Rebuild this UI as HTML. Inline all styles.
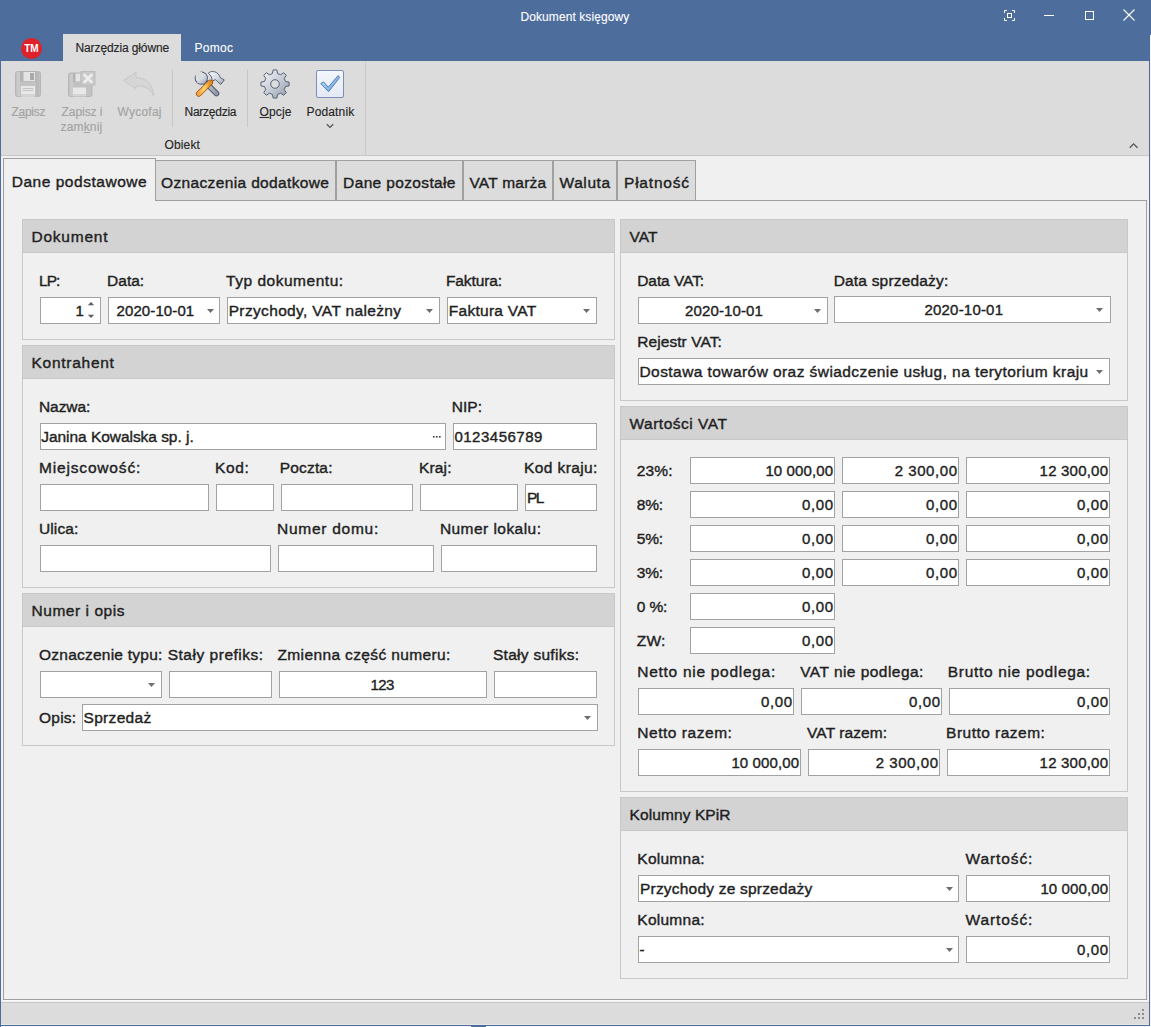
<!DOCTYPE html><html><head><meta charset="utf-8"><style>
html,body{margin:0;padding:0;}
body{width:1151px;height:1027px;position:relative;overflow:hidden;background:#f0f0f0;font-family:"Liberation Sans",sans-serif;}
.b{position:absolute;box-sizing:border-box;}
svg{display:block;}
.t{position:absolute;white-space:nowrap;line-height:20px;font-family:"Liberation Sans",sans-serif;-webkit-text-stroke:0.4px currentColor;}
.r{-webkit-text-stroke:0.15px currentColor;}
</style></head><body>
<div class="b" style="left:1149px;top:0px;width:2px;height:1027px;background:#4d6d9d;"></div>
<div class="b" style="left:0px;top:0px;width:1151px;height:61px;background:#4d6d9d;"></div>
<div class="t" style="top:7px;font-size:12px;color:#ffffff;-webkit-text-stroke:0.1px #fff;left:520.50px;letter-spacing:0.082px;">Dokument księgowy</div>
<svg class="b" style="left:1004px;top:10px" width="11" height="11" viewBox="0 0 11 11"><path d="M0.5 3V0.5H3M8 0.5H10.5V3M10.5 8V10.5H8M3 10.5H0.5V8" stroke="#fff" fill="none"/><rect x="3.5" y="3.5" width="4" height="4" stroke="#fff" fill="none"/></svg>
<div class="b" style="left:1044px;top:15px;width:10px;height:1px;background:#fff;"></div>
<div class="b" style="left:1085px;top:11px;width:9px;height:9px;border:1px solid #fff;"></div>
<svg class="b" style="left:1123px;top:9px" width="12" height="12" viewBox="0 0 12 12"><path d="M0.5 0.5L11.5 11.5M11.5 0.5L0.5 11.5" stroke="#fff" stroke-width="1.1"/></svg>
<svg class="b" style="left:21px;top:38px" width="21" height="21" viewBox="0 0 21 21"><circle cx="10.5" cy="10.5" r="10.5" fill="#df2229"/><text x="10.5" y="14.2" text-anchor="middle" font-family="Liberation Sans" font-weight="bold" font-size="10" fill="#fff">TM</text></svg>
<div class="b" style="left:63px;top:34px;width:118px;height:27px;background:#dcdcdc;"></div>
<div class="t" style="top:38px;font-size:12px;color:#262626;-webkit-text-stroke:0.15px currentColor;left:75.50px;letter-spacing:-0.113px;">Narzędzia główne</div>
<div class="t" style="top:38px;font-size:12px;color:#ffffff;-webkit-text-stroke:0.1px #fff;left:194.50px;letter-spacing:0.285px;">Pomoc</div>
<div class="b" style="left:1px;top:61px;width:1148px;height:95px;background:#dcdcdc;border-bottom:1px solid #c6c6c6;"></div>
<svg class="b" style="left:15px;top:71px" width="26" height="26" viewBox="0 0 26 26">
<rect x="0.5" y="0.5" width="25" height="25" rx="2" fill="#c2c2c2" stroke="#b6b6b6"/>
<rect x="2" y="1" width="3" height="24" fill="#cbcbcb"/>
<rect x="21" y="1" width="3" height="24" fill="#b9b9b9"/>
<rect x="5" y="0.5" width="16" height="10" fill="#b3b3b3"/>
<rect x="8.5" y="1" width="11.5" height="9" fill="#e4e4e4"/>
<rect x="15" y="2" width="4" height="7" fill="#a9a9a9"/>
<rect x="6" y="15" width="14" height="11" fill="#e8e8e8"/>
<rect x="7.5" y="17" width="11" height="1" fill="#c4c4c4"/>
<rect x="7.5" y="19" width="11" height="1" fill="#c4c4c4"/>
<rect x="6" y="23" width="14" height="3" fill="#d4d4d4"/>
</svg>
<svg class="b" style="left:68px;top:71px" width="28" height="26" viewBox="0 0 28 26">
<rect x="0.5" y="2" width="23.5" height="23.5" rx="2" fill="#c2c2c2" stroke="#b6b6b6"/>
<rect x="2" y="3" width="3" height="22" fill="#cbcbcb"/>
<rect x="5" y="2" width="14" height="9" fill="#b3b3b3"/>
<rect x="7.5" y="2.5" width="5" height="8" fill="#e4e4e4"/>
<rect x="5" y="16.5" width="13" height="8.5" fill="#e8e8e8"/>
<rect x="5" y="23" width="13" height="2.5" fill="#d4d4d4"/>
<rect x="13" y="0.5" width="14" height="13.5" fill="#c9c9c9" stroke="#bdbdbd"/>
<path d="M16.5 4L23.5 11M23.5 4L16.5 11" stroke="#eeeeee" stroke-width="2.6" stroke-linecap="round"/>
</svg>
<svg class="b" style="left:122px;top:71px" width="34" height="27" viewBox="0 0 34 27">
<path d="M1.5 9.5L14 1.5V6.5C24 7 31 13 31.5 24.5C28 17 22 14.5 14 15V17.5Z" fill="#d6d6d6" stroke="#c6c6c6" stroke-width="1" stroke-linejoin="round"/>
</svg>
<svg class="b" style="left:190px;top:66px" width="40" height="34" viewBox="0 0 40 34">
<defs><linearGradient id="gs" x1="0" y1="0" x2="1" y2="1"><stop offset="0" stop-color="#f6f8fb"/><stop offset="0.55" stop-color="#d3d8e2"/><stop offset="1" stop-color="#9ca5b6"/></linearGradient>
<linearGradient id="gh" x1="0" y1="0" x2="1" y2="0"><stop offset="0" stop-color="#c9d0dc"/><stop offset="1" stop-color="#8e98aa"/></linearGradient>
<linearGradient id="go" x1="0" y1="0" x2="1" y2="0"><stop offset="0" stop-color="#f3a43a"/><stop offset="0.5" stop-color="#ffd46e"/><stop offset="1" stop-color="#e18a1f"/></linearGradient>
<mask id="wm"><rect width="40" height="34" fill="#fff"/><circle cx="9.4" cy="9.2" r="3.8" fill="#000"/></mask></defs>
<path d="M14.5 15.5L26.5 27.5" stroke="#4d5668" stroke-width="5.6" stroke-linecap="round"/>
<path d="M14.5 15.5L26.5 27.5" stroke="url(#gh)" stroke-width="3.8" stroke-linecap="round"/>
<g mask="url(#wm)"><circle cx="11.3" cy="12.1" r="6.6" fill="#4d5668"/><circle cx="11.3" cy="12.1" r="5.7" fill="url(#gs)"/></g>
<path d="M18.3 7.2C20.5 5 25.8 4.3 29.3 9.3L30.3 11.6L34.3 13.9L30.8 18.4L27.6 15.8L25.5 13.6L22.3 15.2C21.9 11.6 20.6 8.6 18.3 7.2Z" fill="url(#gs)" stroke="#4d5668" stroke-width="0.9" stroke-linejoin="round"/>
<path d="M8.8 27.8L20.3 16.5" stroke="#a8561a" stroke-width="5.8" stroke-linecap="round"/>
<path d="M8.8 27.8L20.3 16.5" stroke="url(#go)" stroke-width="4.2" stroke-linecap="round"/>
</svg>
<svg class="b" style="left:260px;top:69px" width="30" height="30" viewBox="0 0 30 30">
<defs><linearGradient id="gg" x1="0" y1="0" x2="1" y2="1"><stop offset="0" stop-color="#f7f8fb"/><stop offset="0.55" stop-color="#c3c9d4"/><stop offset="1" stop-color="#8f98a8"/></linearGradient></defs>
<path d="M12.48 4.50 L13.11 0.93 L16.89 0.93 L17.52 4.50 L20.64 5.79 L23.61 3.71 L26.29 6.39 L24.21 9.36 L25.50 12.48 L29.07 13.11 L29.07 16.89 L25.50 17.52 L24.21 20.64 L26.29 23.61 L23.61 26.29 L20.64 24.21 L17.52 25.50 L16.89 29.07 L13.11 29.07 L12.48 25.50 L9.36 24.21 L6.39 26.29 L3.71 23.61 L5.79 20.64 L4.50 17.52 L0.93 16.89 L0.93 13.11 L4.50 12.48 L5.79 9.36 L3.71 6.39 L6.39 3.71 L9.36 5.79Z" fill="url(#gg)" stroke="#566072" stroke-width="1" stroke-linejoin="round"/>
<circle cx="15" cy="15" r="4.3" fill="#dcdcdc" stroke="#5a6272" stroke-width="1"/>
</svg>
<svg class="b" style="left:316px;top:70px" width="28" height="28" viewBox="0 0 28 28">
<defs><linearGradient id="gc" x1="0" y1="0" x2="0" y2="1"><stop offset="0" stop-color="#f4f7fc"/><stop offset="1" stop-color="#e3e9f5"/></linearGradient>
<linearGradient id="gk" x1="0" y1="0" x2="1" y2="1"><stop offset="0" stop-color="#cfe8fa"/><stop offset="1" stop-color="#5aa0dc"/></linearGradient></defs>
<rect x="0.5" y="0.5" width="27" height="27" rx="1.5" fill="url(#gc)" stroke="#7c8db8"/>
<path d="M4.8 13.6L7.6 11.9L12.2 17.2L22.2 5.6L23.6 7.6L12.6 21.6Z" fill="url(#gk)" stroke="#3f6db0" stroke-width="0.9" stroke-linejoin="round"/>
</svg>
<div class="b" style="left:172px;top:70px;width:1px;height:57px;background:#c6c6c6"></div>
<div class="b" style="left:247px;top:70px;width:1px;height:57px;background:#c6c6c6"></div>
<div class="b" style="left:365px;top:61px;width:1px;height:94px;background:#c8c8c8"></div>
<svg class="b" style="left:326px;top:123px" width="8" height="6" viewBox="0 0 8 6"><path d="M0.8 1.2L4 4.4L7.2 1.2" stroke="#555" stroke-width="1.3" fill="none"/></svg>
<svg class="b" style="left:1128px;top:142px" width="11" height="7" viewBox="0 0 11 7"><path d="M1.7 5.8L5.6 1.9L9.5 5.8" stroke="#555" stroke-width="1.3" fill="none"/></svg>
<div class="t" style="top:102px;font-size:12px;color:#a3a3a3;-webkit-text-stroke:0.15px currentColor;left:11.50px;letter-spacing:-0.275px;">Z<u>a</u>pisz</div>
<div class="t" style="top:102px;font-size:12px;color:#a3a3a3;-webkit-text-stroke:0.15px currentColor;left:61.50px;letter-spacing:-0.049px;">Zapisz i</div>
<div class="t" style="top:117px;font-size:12px;color:#a3a3a3;-webkit-text-stroke:0.15px currentColor;left:60.50px;letter-spacing:0.169px;">zam<u>k</u>nij</div>
<div class="t" style="top:102px;font-size:12px;color:#a3a3a3;-webkit-text-stroke:0.15px currentColor;left:117.50px;letter-spacing:0.237px;">Wycofaj</div>
<div class="t" style="top:102px;font-size:12px;color:#262626;-webkit-text-stroke:0.15px currentColor;left:184.50px;letter-spacing:-0.254px;">Narzędzia</div>
<div class="t" style="top:102px;font-size:12px;color:#262626;-webkit-text-stroke:0.15px currentColor;left:259.50px;letter-spacing:0.160px;"><u>O</u>pcje</div>
<div class="t" style="top:102px;font-size:12px;color:#262626;-webkit-text-stroke:0.15px currentColor;left:306.50px;letter-spacing:0.142px;">Podatnik</div>
<div class="t" style="top:135px;font-size:12px;color:#262626;-webkit-text-stroke:0.15px currentColor;left:164.50px;letter-spacing:0.142px;">Obiekt</div>
<div class="b" style="left:3px;top:200px;width:1144px;height:800px;border:1px solid #a0a0a0;background:#f0f0f0;"></div>
<div class="b" style="left:3px;top:1000px;width:1144px;height:1px;background:#fbfbfb;"></div>
<div class="b" style="left:155px;top:160px;width:181px;height:41px;background:#dcdcdc;border:1px solid #a0a0a0;"></div>
<div class="t" style="top:173px;font-size:15.5px;color:#1f1f1f;left:161.00px;letter-spacing:0.361px;">Oznaczenia dodatkowe</div>
<div class="b" style="left:336px;top:160px;width:127px;height:41px;background:#dcdcdc;border:1px solid #a0a0a0;"></div>
<div class="t" style="top:173px;font-size:15.5px;color:#1f1f1f;left:343.10px;letter-spacing:0.360px;">Dane pozostałe</div>
<div class="b" style="left:463px;top:160px;width:90px;height:41px;background:#dcdcdc;border:1px solid #a0a0a0;"></div>
<div class="t" style="top:173px;font-size:15.5px;color:#1f1f1f;left:469.40px;letter-spacing:0.233px;">VAT marża</div>
<div class="b" style="left:553px;top:160px;width:64px;height:41px;background:#dcdcdc;border:1px solid #a0a0a0;"></div>
<div class="t" style="top:173px;font-size:15.5px;color:#1f1f1f;left:559.50px;letter-spacing:0.586px;">Waluta</div>
<div class="b" style="left:617px;top:160px;width:79px;height:41px;background:#dcdcdc;border:1px solid #a0a0a0;"></div>
<div class="t" style="top:173px;font-size:15.5px;color:#1f1f1f;left:624.00px;letter-spacing:0.792px;">Płatność</div>
<div class="b" style="left:3px;top:158px;width:153px;height:43px;background:#f0f0f0;border:1px solid #a0a0a0;border-bottom:0;"></div>
<div class="t" style="top:172px;font-size:15.5px;color:#1f1f1f;left:11.70px;letter-spacing:0.533px;">Dane podstawowe</div>
<div class="b" style="left:1px;top:1002px;width:1148px;height:23px;background:#dcdcdc;border-top:1px solid #c8c8c8;"></div>
<div class="b" style="left:1142px;top:1009px;width:2px;height:2px;background:#8c8c8c;"></div>
<div class="b" style="left:1138px;top:1013px;width:2px;height:2px;background:#8c8c8c;"></div>
<div class="b" style="left:1142px;top:1013px;width:2px;height:2px;background:#8c8c8c;"></div>
<div class="b" style="left:1134px;top:1017px;width:2px;height:2px;background:#8c8c8c;"></div>
<div class="b" style="left:1138px;top:1017px;width:2px;height:2px;background:#8c8c8c;"></div>
<div class="b" style="left:1142px;top:1017px;width:2px;height:2px;background:#8c8c8c;"></div>
<div class="b" style="left:0px;top:1025px;width:1151px;height:1px;background:#4d6d9d;"></div>
<div class="b" style="left:0px;top:1026px;width:1151px;height:1px;background:#f8f8f8;"></div>
<div class="b" style="left:471px;top:1026px;width:15px;height:1px;background:#4d6d9d;"></div>
<div class="b" style="left:1px;top:1024px;width:1148px;height:1px;background:#e6e6e6;"></div>
<div class="b" style="left:0px;top:0px;width:1px;height:1027px;background:#4d6d9d;"></div>
<div class="b" style="left:22px;top:219px;width:593px;height:121px;border:1px solid #c8c8c8;background:#f0f0f0;"></div>
<div class="b" style="left:22px;top:219px;width:593px;height:34px;border:1px solid #c8c8c8;background:#d3d3d3;"></div>
<div class="t" style="top:227px;font-size:15.5px;color:#1f1f1f;left:31.50px;letter-spacing:0.763px;">Dokument</div>
<div class="t" style="top:271px;font-size:15.5px;color:#1f1f1f;left:39.00px;letter-spacing:-0.983px;">LP:</div>
<div class="t" style="top:271px;font-size:15.5px;color:#1f1f1f;left:107.10px;letter-spacing:-0.016px;">Data:</div>
<div class="t" style="top:271px;font-size:15.5px;color:#1f1f1f;left:226.10px;letter-spacing:0.516px;">Typ dokumentu:</div>
<div class="t" style="top:271px;font-size:15.5px;color:#1f1f1f;left:446.00px;letter-spacing:-0.123px;">Faktura:</div>
<div class="b" style="left:40px;top:297px;width:61px;height:27px;background:#fff;border:1px solid #a2a2a2;"></div>
<div class="t" style="top:301px;font-size:15px;color:#1f1f1f;left:75.50px;">1</div>
<svg class="b" style="left:87px;top:300px" width="8" height="20" viewBox="0 0 8 20"><path d="M0.8 5.2L4 2L7.2 5.2z" fill="#5e5e5e"/><path d="M0.8 14.8L4 18L7.2 14.8z" fill="#5e5e5e"/></svg>
<div class="b" style="left:108px;top:297px;width:112px;height:27px;background:#fff;border:1px solid #a2a2a2;"></div>
<div class="b" style="left:207px;top:309px;width:7px;height:4px"><svg width="7" height="4" viewBox="0 0 7 4"><path d="M0 0h7L3.5 4z" fill="#6e6e6e"/></svg></div>
<div class="t" style="top:301px;font-size:15px;color:#1f1f1f;left:116.50px;letter-spacing:0.107px;">2020-10-01</div>
<div class="b" style="left:227px;top:297px;width:213px;height:27px;background:#fff;border:1px solid #a2a2a2;"></div>
<div class="b" style="left:426px;top:309px;width:7px;height:4px"><svg width="7" height="4" viewBox="0 0 7 4"><path d="M0 0h7L3.5 4z" fill="#6e6e6e"/></svg></div>
<div class="t" style="top:301px;font-size:15.5px;color:#1f1f1f;left:228.70px;letter-spacing:0.346px;">Przychody, VAT należny</div>
<div class="b" style="left:447px;top:297px;width:150px;height:27px;background:#fff;border:1px solid #a2a2a2;"></div>
<div class="b" style="left:583px;top:309px;width:7px;height:4px"><svg width="7" height="4" viewBox="0 0 7 4"><path d="M0 0h7L3.5 4z" fill="#6e6e6e"/></svg></div>
<div class="t" style="top:301px;font-size:15.5px;color:#1f1f1f;left:448.80px;letter-spacing:0.270px;">Faktura VAT</div>
<div class="b" style="left:22px;top:345px;width:593px;height:243px;border:1px solid #c8c8c8;background:#f0f0f0;"></div>
<div class="b" style="left:22px;top:345px;width:593px;height:34px;border:1px solid #c8c8c8;background:#d3d3d3;"></div>
<div class="t" style="top:353px;font-size:15.5px;color:#1f1f1f;left:31.50px;letter-spacing:0.728px;">Kontrahent</div>
<div class="t" style="top:397px;font-size:15.5px;color:#1f1f1f;left:39.00px;letter-spacing:-0.078px;">Nazwa:</div>
<div class="t" style="top:397px;font-size:15.5px;color:#1f1f1f;left:451.80px;letter-spacing:0.015px;">NIP:</div>
<div class="b" style="left:40px;top:423px;width:406px;height:27px;background:#fff;border:1px solid #a2a2a2;"></div>
<svg class="b" style="left:433px;top:436px" width="8" height="2"><rect x="0" y="0" width="1.6" height="1.6" fill="#3a3a3a"/><rect x="3" y="0" width="1.6" height="1.6" fill="#3a3a3a"/><rect x="6" y="0" width="1.6" height="1.6" fill="#3a3a3a"/></svg>
<div class="t" style="top:427px;font-size:15.5px;color:#1f1f1f;left:41.20px;letter-spacing:-0.041px;">Janina Kowalska sp. j.</div>
<div class="b" style="left:453px;top:423px;width:144px;height:27px;background:#fff;border:1px solid #a2a2a2;"></div>
<div class="t" style="top:427px;font-size:15px;color:#1f1f1f;left:454.40px;letter-spacing:0.507px;">0123456789</div>
<div class="t" style="top:458px;font-size:15.5px;color:#1f1f1f;left:39.00px;letter-spacing:0.830px;">Miejscowość:</div>
<div class="t" style="top:458px;font-size:15.5px;color:#1f1f1f;left:215.00px;letter-spacing:0.636px;">Kod:</div>
<div class="t" style="top:458px;font-size:15.5px;color:#1f1f1f;left:279.70px;letter-spacing:0.183px;">Poczta:</div>
<div class="t" style="top:458px;font-size:15.5px;color:#1f1f1f;left:419.00px;letter-spacing:0.156px;">Kraj:</div>
<div class="t" style="top:458px;font-size:15.5px;color:#1f1f1f;left:524.10px;letter-spacing:0.389px;">Kod kraju:</div>
<div class="b" style="left:40px;top:484px;width:169px;height:27px;background:#fff;border:1px solid #a2a2a2;"></div>
<div class="b" style="left:216px;top:484px;width:58px;height:27px;background:#fff;border:1px solid #a2a2a2;"></div>
<div class="b" style="left:281px;top:484px;width:132px;height:27px;background:#fff;border:1px solid #a2a2a2;"></div>
<div class="b" style="left:420px;top:484px;width:98px;height:27px;background:#fff;border:1px solid #a2a2a2;"></div>
<div class="b" style="left:525px;top:484px;width:72px;height:27px;background:#fff;border:1px solid #a2a2a2;"></div>
<div class="t" style="top:488px;font-size:15.5px;color:#1f1f1f;left:526.90px;letter-spacing:-1.569px;">PL</div>
<div class="t" style="top:519px;font-size:15.5px;color:#1f1f1f;left:39.00px;letter-spacing:0.107px;">Ulica:</div>
<div class="t" style="top:519px;font-size:15.5px;color:#1f1f1f;left:277.00px;letter-spacing:0.739px;">Numer domu:</div>
<div class="t" style="top:519px;font-size:15.5px;color:#1f1f1f;left:439.90px;letter-spacing:0.456px;">Numer lokalu:</div>
<div class="b" style="left:40px;top:545px;width:231px;height:27px;background:#fff;border:1px solid #a2a2a2;"></div>
<div class="b" style="left:278px;top:545px;width:156px;height:27px;background:#fff;border:1px solid #a2a2a2;"></div>
<div class="b" style="left:441px;top:545px;width:156px;height:27px;background:#fff;border:1px solid #a2a2a2;"></div>
<div class="b" style="left:22px;top:593px;width:593px;height:153px;border:1px solid #c8c8c8;background:#f0f0f0;"></div>
<div class="b" style="left:22px;top:593px;width:593px;height:34px;border:1px solid #c8c8c8;background:#d3d3d3;"></div>
<div class="t" style="top:601px;font-size:15.5px;color:#1f1f1f;left:31.50px;letter-spacing:0.545px;">Numer i opis</div>
<div class="t" style="top:645px;font-size:15.5px;color:#1f1f1f;left:39.00px;letter-spacing:0.236px;">Oznaczenie typu:</div>
<div class="t" style="top:645px;font-size:15.5px;color:#1f1f1f;left:167.70px;letter-spacing:0.520px;">Stały prefiks:</div>
<div class="t" style="top:645px;font-size:15.5px;color:#1f1f1f;left:277.50px;letter-spacing:0.370px;">Zmienna część numeru:</div>
<div class="t" style="top:645px;font-size:15.5px;color:#1f1f1f;left:493.00px;letter-spacing:0.275px;">Stały sufiks:</div>
<div class="b" style="left:40px;top:671px;width:122px;height:27px;background:#fff;border:1px solid #a2a2a2;"></div>
<div class="b" style="left:148px;top:683px;width:7px;height:4px"><svg width="7" height="4" viewBox="0 0 7 4"><path d="M0 0h7L3.5 4z" fill="#6e6e6e"/></svg></div>
<div class="b" style="left:169px;top:671px;width:103px;height:27px;background:#fff;border:1px solid #a2a2a2;"></div>
<div class="b" style="left:279px;top:671px;width:208px;height:27px;background:#fff;border:1px solid #a2a2a2;"></div>
<div class="b" style="left:494px;top:671px;width:103px;height:27px;background:#fff;border:1px solid #a2a2a2;"></div>
<div class="t" style="top:675px;font-size:15px;color:#1f1f1f;left:370.40px;letter-spacing:-0.516px;">123</div>
<div class="t" style="top:708px;font-size:15.5px;color:#1f1f1f;left:39.00px;letter-spacing:0.228px;">Opis:</div>
<div class="b" style="left:82px;top:704px;width:516px;height:27px;background:#fff;border:1px solid #a2a2a2;"></div>
<div class="b" style="left:584px;top:716px;width:7px;height:4px"><svg width="7" height="4" viewBox="0 0 7 4"><path d="M0 0h7L3.5 4z" fill="#6e6e6e"/></svg></div>
<div class="t" style="top:708px;font-size:15.5px;color:#1f1f1f;left:83.50px;letter-spacing:0.317px;">Sprzedaż</div>
<div class="b" style="left:620px;top:219px;width:508px;height:182px;border:1px solid #c8c8c8;background:#f0f0f0;"></div>
<div class="b" style="left:620px;top:219px;width:508px;height:34px;border:1px solid #c8c8c8;background:#d3d3d3;"></div>
<div class="t" style="top:227px;font-size:15.5px;color:#1f1f1f;left:629.50px;letter-spacing:0.070px;">VAT</div>
<div class="t" style="top:271px;font-size:15.5px;color:#1f1f1f;left:637.20px;letter-spacing:-0.061px;">Data VAT:</div>
<div class="t" style="top:271px;font-size:15.5px;color:#1f1f1f;left:833.70px;letter-spacing:0.186px;">Data sprzedaży:</div>
<div class="b" style="left:638px;top:297px;width:190px;height:27px;background:#fff;border:1px solid #a2a2a2;"></div>
<div class="b" style="left:814px;top:309px;width:7px;height:4px"><svg width="7" height="4" viewBox="0 0 7 4"><path d="M0 0h7L3.5 4z" fill="#6e6e6e"/></svg></div>
<div class="t" style="top:301px;font-size:15px;color:#1f1f1f;left:685.10px;letter-spacing:0.118px;">2020-10-01</div>
<div class="b" style="left:834px;top:296px;width:277px;height:27px;background:#fff;border:1px solid #a2a2a2;"></div>
<div class="b" style="left:1096px;top:308px;width:7px;height:4px"><svg width="7" height="4" viewBox="0 0 7 4"><path d="M0 0h7L3.5 4z" fill="#6e6e6e"/></svg></div>
<div class="t" style="top:300px;font-size:15px;color:#1f1f1f;left:924.50px;letter-spacing:0.196px;">2020-10-01</div>
<div class="t" style="top:332px;font-size:15.5px;color:#1f1f1f;left:637.20px;letter-spacing:0.078px;">Rejestr VAT:</div>
<div class="b" style="left:638px;top:358px;width:472px;height:27px;background:#fff;border:1px solid #a2a2a2;"></div>
<div class="b" style="left:1096px;top:370px;width:7px;height:4px"><svg width="7" height="4" viewBox="0 0 7 4"><path d="M0 0h7L3.5 4z" fill="#6e6e6e"/></svg></div>
<div class="t" style="top:362px;font-size:15.5px;color:#1f1f1f;left:639.50px;letter-spacing:0.428px;">Dostawa towarów oraz świadczenie usług, na terytorium kraju</div>
<div class="b" style="left:620px;top:406px;width:508px;height:386px;border:1px solid #c8c8c8;background:#f0f0f0;"></div>
<div class="b" style="left:620px;top:406px;width:508px;height:34px;border:1px solid #c8c8c8;background:#d3d3d3;"></div>
<div class="t" style="top:414px;font-size:15.5px;color:#1f1f1f;left:629.50px;letter-spacing:0.504px;">Wartości VAT</div>
<div class="t" style="top:461px;font-size:15.5px;color:#1f1f1f;left:636.80px;letter-spacing:0.119px;">23%:</div>
<div class="b" style="left:690px;top:457px;width:145px;height:27px;background:#fff;border:1px solid #a2a2a2;"></div>
<div class="t" style="top:461px;font-size:15px;color:#1f1f1f;left:765.40px;letter-spacing:0.108px;">10 000,00</div>
<div class="b" style="left:842px;top:457px;width:117px;height:27px;background:#fff;border:1px solid #a2a2a2;"></div>
<div class="t" style="top:461px;font-size:15px;color:#1f1f1f;left:894.70px;letter-spacing:0.558px;">2 300,00</div>
<div class="b" style="left:966px;top:457px;width:144px;height:27px;background:#fff;border:1px solid #a2a2a2;"></div>
<div class="t" style="top:461px;font-size:15px;color:#1f1f1f;left:1039.60px;letter-spacing:0.208px;">12 300,00</div>
<div class="t" style="top:495px;font-size:15.5px;color:#1f1f1f;left:636.80px;letter-spacing:-0.209px;">8%:</div>
<div class="b" style="left:690px;top:491px;width:145px;height:27px;background:#fff;border:1px solid #a2a2a2;"></div>
<div class="t" style="top:495px;font-size:15px;color:#1f1f1f;left:802.10px;letter-spacing:0.566px;">0,00</div>
<div class="b" style="left:842px;top:491px;width:117px;height:27px;background:#fff;border:1px solid #a2a2a2;"></div>
<div class="t" style="top:495px;font-size:15px;color:#1f1f1f;left:926.10px;letter-spacing:0.566px;">0,00</div>
<div class="b" style="left:966px;top:491px;width:144px;height:27px;background:#fff;border:1px solid #a2a2a2;"></div>
<div class="t" style="top:495px;font-size:15px;color:#1f1f1f;left:1077.10px;letter-spacing:0.566px;">0,00</div>
<div class="t" style="top:529px;font-size:15.5px;color:#1f1f1f;left:636.80px;letter-spacing:-0.209px;">5%:</div>
<div class="b" style="left:690px;top:525px;width:145px;height:27px;background:#fff;border:1px solid #a2a2a2;"></div>
<div class="t" style="top:529px;font-size:15px;color:#1f1f1f;left:802.10px;letter-spacing:0.566px;">0,00</div>
<div class="b" style="left:842px;top:525px;width:117px;height:27px;background:#fff;border:1px solid #a2a2a2;"></div>
<div class="t" style="top:529px;font-size:15px;color:#1f1f1f;left:926.10px;letter-spacing:0.566px;">0,00</div>
<div class="b" style="left:966px;top:525px;width:144px;height:27px;background:#fff;border:1px solid #a2a2a2;"></div>
<div class="t" style="top:529px;font-size:15px;color:#1f1f1f;left:1077.10px;letter-spacing:0.566px;">0,00</div>
<div class="t" style="top:563px;font-size:15.5px;color:#1f1f1f;left:636.80px;letter-spacing:-0.209px;">3%:</div>
<div class="b" style="left:690px;top:559px;width:145px;height:27px;background:#fff;border:1px solid #a2a2a2;"></div>
<div class="t" style="top:563px;font-size:15px;color:#1f1f1f;left:802.10px;letter-spacing:0.566px;">0,00</div>
<div class="b" style="left:842px;top:559px;width:117px;height:27px;background:#fff;border:1px solid #a2a2a2;"></div>
<div class="t" style="top:563px;font-size:15px;color:#1f1f1f;left:926.10px;letter-spacing:0.566px;">0,00</div>
<div class="b" style="left:966px;top:559px;width:144px;height:27px;background:#fff;border:1px solid #a2a2a2;"></div>
<div class="t" style="top:563px;font-size:15px;color:#1f1f1f;left:1077.10px;letter-spacing:0.566px;">0,00</div>
<div class="t" style="top:597px;font-size:15.5px;color:#1f1f1f;left:636.80px;letter-spacing:-0.139px;">0 %:</div>
<div class="b" style="left:690px;top:593px;width:145px;height:27px;background:#fff;border:1px solid #a2a2a2;"></div>
<div class="t" style="top:597px;font-size:15px;color:#1f1f1f;left:802.10px;letter-spacing:0.566px;">0,00</div>
<div class="t" style="top:631px;font-size:15.5px;color:#1f1f1f;left:636.80px;letter-spacing:0.238px;">ZW:</div>
<div class="b" style="left:690px;top:627px;width:145px;height:27px;background:#fff;border:1px solid #a2a2a2;"></div>
<div class="t" style="top:631px;font-size:15px;color:#1f1f1f;left:802.10px;letter-spacing:0.566px;">0,00</div>
<div class="t" style="top:662px;font-size:15.5px;color:#1f1f1f;left:637.30px;letter-spacing:0.710px;">Netto nie podlega:</div>
<div class="t" style="top:662px;font-size:15.5px;color:#1f1f1f;left:800.20px;letter-spacing:0.457px;">VAT nie podlega:</div>
<div class="t" style="top:662px;font-size:15.5px;color:#1f1f1f;left:947.80px;letter-spacing:0.676px;">Brutto nie podlega:</div>
<div class="b" style="left:638px;top:688px;width:156px;height:27px;background:#fff;border:1px solid #a2a2a2;"></div>
<div class="t" style="top:692px;font-size:15px;color:#1f1f1f;left:761.10px;letter-spacing:0.566px;">0,00</div>
<div class="b" style="left:801px;top:688px;width:141px;height:27px;background:#fff;border:1px solid #a2a2a2;"></div>
<div class="t" style="top:692px;font-size:15px;color:#1f1f1f;left:909.10px;letter-spacing:0.566px;">0,00</div>
<div class="b" style="left:949px;top:688px;width:161px;height:27px;background:#fff;border:1px solid #a2a2a2;"></div>
<div class="t" style="top:692px;font-size:15px;color:#1f1f1f;left:1077.10px;letter-spacing:0.566px;">0,00</div>
<div class="t" style="top:723px;font-size:15.5px;color:#1f1f1f;left:637.30px;letter-spacing:0.533px;">Netto razem:</div>
<div class="t" style="top:723px;font-size:15.5px;color:#1f1f1f;left:807.10px;letter-spacing:0.083px;">VAT razem:</div>
<div class="t" style="top:723px;font-size:15.5px;color:#1f1f1f;left:946.10px;letter-spacing:0.481px;">Brutto razem:</div>
<div class="b" style="left:638px;top:749px;width:163px;height:27px;background:#fff;border:1px solid #a2a2a2;"></div>
<div class="t" style="top:753px;font-size:15px;color:#1f1f1f;left:731.40px;letter-spacing:0.108px;">10 000,00</div>
<div class="b" style="left:808px;top:749px;width:132px;height:27px;background:#fff;border:1px solid #a2a2a2;"></div>
<div class="t" style="top:753px;font-size:15px;color:#1f1f1f;left:875.70px;letter-spacing:0.558px;">2 300,00</div>
<div class="b" style="left:947px;top:749px;width:163px;height:27px;background:#fff;border:1px solid #a2a2a2;"></div>
<div class="t" style="top:753px;font-size:15px;color:#1f1f1f;left:1039.60px;letter-spacing:0.208px;">12 300,00</div>
<div class="b" style="left:620px;top:797px;width:508px;height:182px;border:1px solid #c8c8c8;background:#f0f0f0;"></div>
<div class="b" style="left:620px;top:797px;width:508px;height:34px;border:1px solid #c8c8c8;background:#d3d3d3;"></div>
<div class="t" style="top:805px;font-size:15.5px;color:#1f1f1f;left:629.50px;letter-spacing:0.097px;">Kolumny KPiR</div>
<div class="t" style="top:849px;font-size:15.5px;color:#1f1f1f;left:637.30px;letter-spacing:0.259px;">Kolumna:</div>
<div class="t" style="top:849px;font-size:15.5px;color:#1f1f1f;left:965.50px;letter-spacing:0.903px;">Wartość:</div>
<div class="b" style="left:638px;top:875px;width:321px;height:27px;background:#fff;border:1px solid #a2a2a2;"></div>
<div class="b" style="left:946px;top:887px;width:7px;height:4px"><svg width="7" height="4" viewBox="0 0 7 4"><path d="M0 0h7L3.5 4z" fill="#6e6e6e"/></svg></div>
<div class="t" style="top:879px;font-size:15.5px;color:#1f1f1f;left:640.00px;letter-spacing:0.205px;">Przychody ze sprzedaży</div>
<div class="b" style="left:966px;top:875px;width:144px;height:27px;background:#fff;border:1px solid #a2a2a2;"></div>
<div class="t" style="top:879px;font-size:15px;color:#1f1f1f;left:1040.40px;letter-spacing:0.108px;">10 000,00</div>
<div class="t" style="top:910px;font-size:15.5px;color:#1f1f1f;left:637.30px;letter-spacing:0.259px;">Kolumna:</div>
<div class="t" style="top:910px;font-size:15.5px;color:#1f1f1f;left:965.50px;letter-spacing:0.903px;">Wartość:</div>
<div class="b" style="left:638px;top:936px;width:321px;height:27px;background:#fff;border:1px solid #a2a2a2;"></div>
<div class="b" style="left:946px;top:948px;width:7px;height:4px"><svg width="7" height="4" viewBox="0 0 7 4"><path d="M0 0h7L3.5 4z" fill="#6e6e6e"/></svg></div>
<div class="t" style="top:940px;font-size:15px;color:#1f1f1f;left:639.50px;">-</div>
<div class="b" style="left:966px;top:936px;width:144px;height:27px;background:#fff;border:1px solid #a2a2a2;"></div>
<div class="t" style="top:940px;font-size:15px;color:#1f1f1f;left:1077.10px;letter-spacing:0.566px;">0,00</div>
<div class="b" style="left:1150px;top:35px;width:1px;height:992px;background:#f2f2f2;"></div>
</body></html>
